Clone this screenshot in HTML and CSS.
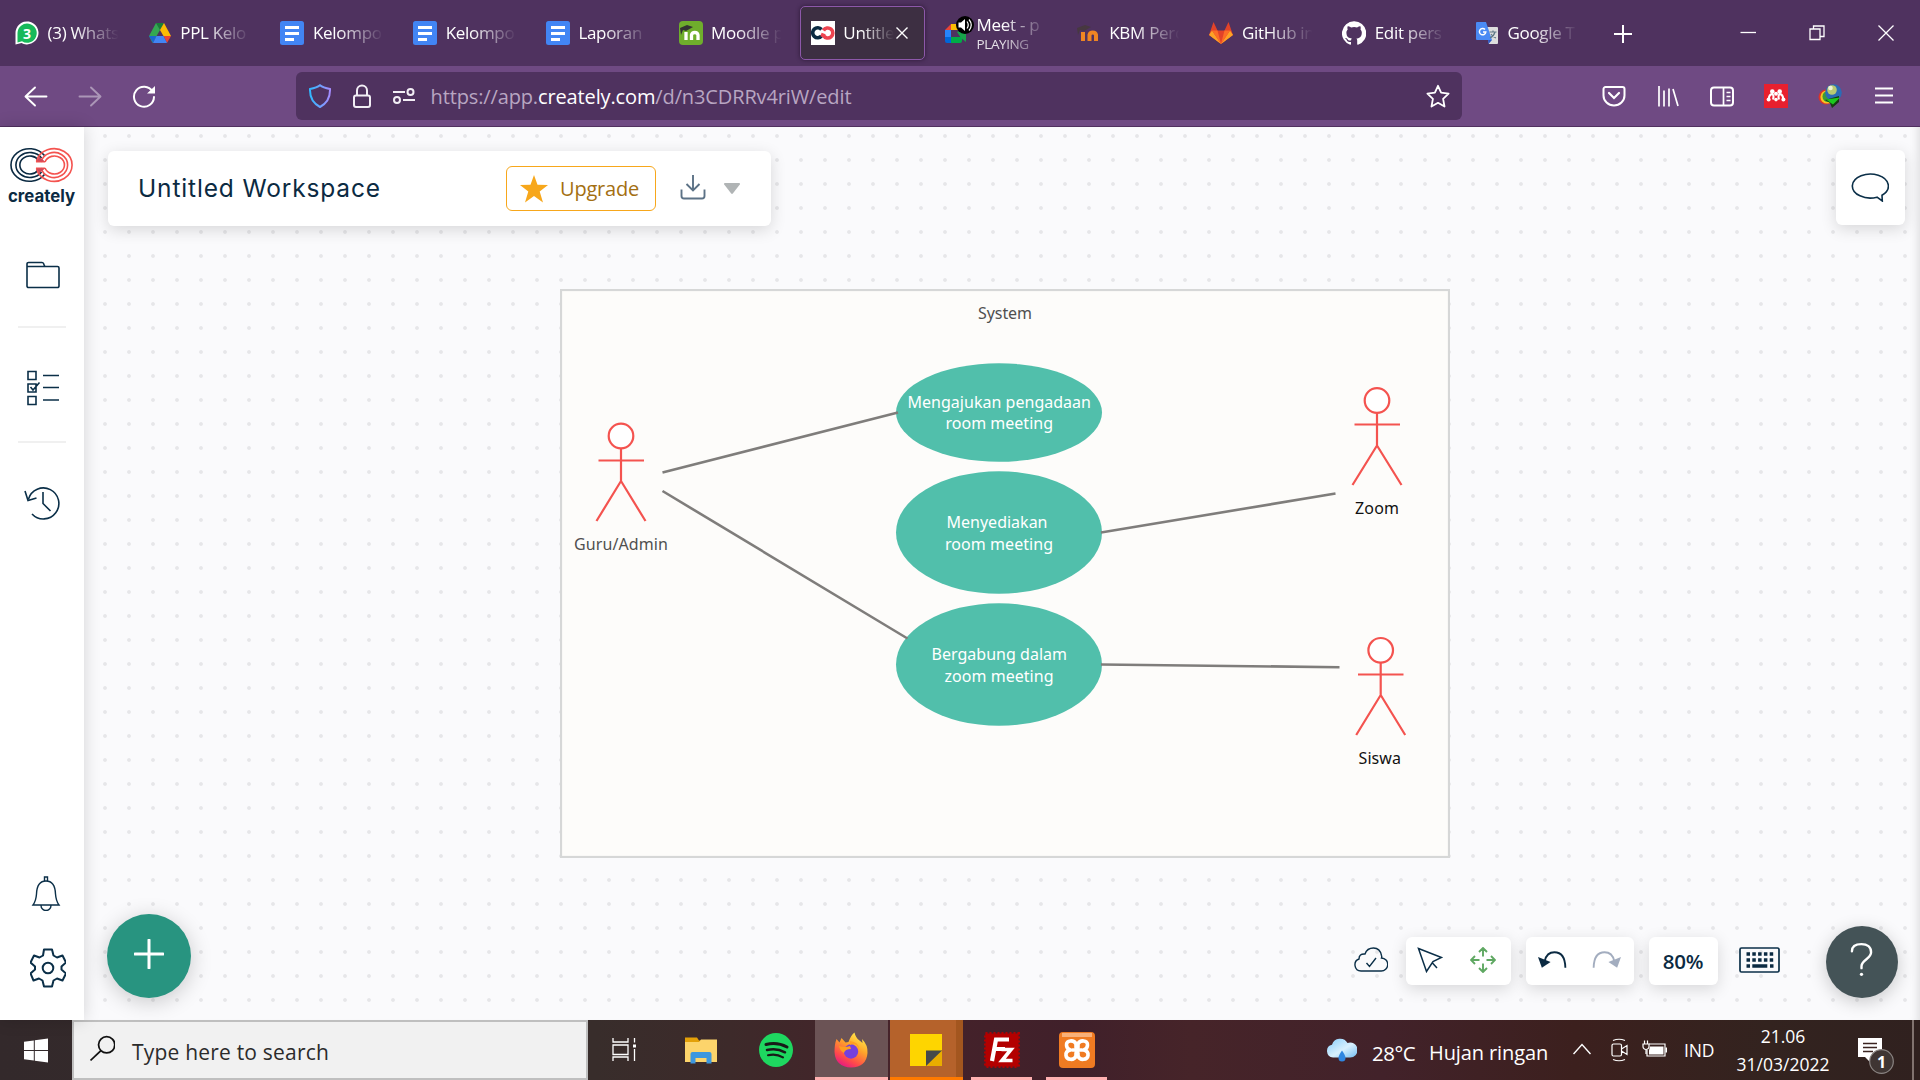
FILE: index.html
```html
<!DOCTYPE html>
<html lang="en">
<head>
<meta charset="utf-8">
<title>Untitled Workspace</title>
<link rel="stylesheet" href="styles.css">
</head>
<body>
<header class="browser">
  <div class="tabstrip">
    <div class="tab"><svg class="fav" viewBox="0 0 24 24"><path d="M0.5 23.5V12a11.5 11.5 0 1 1 6 10z" fill="#fff"/><path d="M2.5 21.5V12a9.6 9.6 0 1 1 4.5 8.3z" fill="#17b95a"/><text x="12" y="17.5" text-anchor="middle" class="wa-count">3</text></svg><span class="tab-title">(3) Whats</span></div>
    <div class="tab"><svg class="fav" viewBox="0 0 24 24"><path d="M8 2h8l-4 7z" fill="#188038"/><path d="M8 2l4 7-7.500 13L1 15z" fill="#34a853"/><path d="M16 2l7 13h-7.500L12 9z" fill="#fbbc04"/><path d="M15.500 15H23l-4 7z" fill="#ea4335"/><path d="M8.500 15H1l4 7z" fill="#1967d2"/><path d="M8.500 15h7l3.500 7H5z" fill="#4285f4"/></svg><span class="tab-title">PPL Kelo</span></div>
    <div class="tab"><svg class="fav" viewBox="0 0 24 24"><rect width="24" height="24" rx="2.500" fill="#4285f4"/><path d="M5 6.500h14M5 12.500h14M5 18.500h9" stroke="#fff" stroke-width="2.800"/></svg><span class="tab-title">Kelompo</span></div>
    <div class="tab"><svg class="fav" viewBox="0 0 24 24"><rect width="24" height="24" rx="2.500" fill="#4285f4"/><path d="M5 6.500h14M5 12.500h14M5 18.500h9" stroke="#fff" stroke-width="2.800"/></svg><span class="tab-title">Kelompo</span></div>
    <div class="tab"><svg class="fav" viewBox="0 0 24 24"><rect width="24" height="24" rx="2.500" fill="#4285f4"/><path d="M5 6.500h14M5 12.500h14M5 18.500h9" stroke="#fff" stroke-width="2.800"/></svg><span class="tab-title">Laporan</span></div>
    <div class="tab"><svg class="fav" viewBox="0 0 24 24"><rect width="24" height="24" rx="4" fill="#6fae2c"/><path d="M6.500 11v8M11 19v-6.500a2.700 2.700 0 0 1 5.300 0V19m0-6.500a2.700 2.700 0 0 1 5.300 0V19" fill="none" stroke="#fff" stroke-width="0"/><path d="M7 11v8M12.500 19v-5a3.300 3 0 0 1 6.500 0v5" fill="none" stroke="#fff" stroke-width="3.300"/><path d="M1 7l7-3 6 2-7 4-3-1-2 5z" fill="#333"/></svg><span class="tab-title">Moodle p</span></div>
    <div class="tab active"><svg class="fav" viewBox="0 0 24 24"><rect width="24" height="24" fill="#fff"/><path d="M10.500 8.500a5 5 0 1 0 0 6.500" fill="none" stroke="#0b2a42" stroke-width="3.600"/><path d="M12.500 9.500a5 5 0 1 1 0 5M10 13.500l4 1.500" fill="none" stroke="#ee4450" stroke-width="3.600"/></svg><span class="tab-title short">Untitle</span><svg class="tab-close" viewBox="0 0 12 12"><path d="M.5.5l11 11M11.500.5l-11 11" stroke="#fff" stroke-width="1.400"/></svg></div>
    <div class="tab meet"><svg class="fav" viewBox="0 0 24 24"><path d="M7 3v6H1z" fill="#ea4335"/><path d="M7 3h10v6H7z" fill="#fbbc04"/><path d="M1 9h6v7H1z" fill="#2684fc"/><path d="M1 16h6v6H3a2 2 0 0 1-2-2z" fill="#0066da"/><path d="M7 16h11v4a2 2 0 0 1-2 2H7z" fill="#00ac47"/><path d="M13 11l9-5v15l-5-4z" fill="#18a34a"/></svg><svg class="sound" viewBox="0 0 18 18"><circle cx="9" cy="9" r="9" fill="#000"/><path d="M2.500 6.500h2.500L9 3v12L5 11.500H2.500z" fill="#fff"/><path d="M11 5.500q2.500 3.500 0 7M13 3.500q4.500 5.500 0 11" stroke="#fff" fill="none" stroke-width="1.200"/></svg><span class="tab-lines"><span class="tab-title">Meet - p</span><span class="tab-title small">PLAYING</span></span></div>
    <div class="tab"><svg class="fav" viewBox="0 0 24 24"><path d="M6 11v9M12.500 20v-6a3.300 3 0 0 1 6.500 0v6" fill="none" stroke="#ef8523" stroke-width="4"/><path d="M0 7l8-3 6 2-7 4-4-1-2 5z" fill="#473840"/></svg><span class="tab-title">KBM Perc</span></div>
    <div class="tab"><svg class="fav" viewBox="0 0 24 24"><path d="M4.500 1L0 14l12 9 12-9-4.500-13L15.500 9.500h-7z" fill="#e24329"/><path d="M0 14l3-4.500L12 23zM24 14l-3-4.500L12 23z" fill="#fca326"/><path d="M3 9.500h5.500L12 23zM21 9.500h-5.500L12 23z" fill="#fc6d26"/></svg><span class="tab-title">GitHub in</span></div>
    <div class="tab"><svg class="fav" viewBox="0 0 24 24"><path fill="#fff" d="M12 .3a12 12 0 0 0-3.800 23.400c.6.100.8-.3.800-.6v-2.200c-3.300.7-4-1.400-4-1.400-.6-1.400-1.400-1.800-1.400-1.800-1-.7.100-.7.100-.7 1.200.1 1.900 1.200 1.900 1.200 1 1.900 2.800 1.300 3.500 1 .1-.8.400-1.300.8-1.600-2.700-.3-5.500-1.300-5.500-6 0-1.200.5-2.300 1.300-3.100-.2-.4-.6-1.600 0-3.200 0 0 1-.3 3.400 1.200a11.500 11.500 0 0 1 6 0c2.300-1.500 3.300-1.200 3.300-1.200.6 1.600.2 2.800.1 3.200.8.800 1.300 1.900 1.300 3.200 0 4.600-2.800 5.600-5.500 5.900.5.400.9 1.100.9 2.200v3.300c0 .3.100.7.800.6A12 12 0 0 0 12 .3"/></svg><span class="tab-title">Edit pers</span></div>
    <div class="tab"><svg class="fav" viewBox="0 0 24 24"><path d="M10 6h12a1 1 0 0 1 1 1v15a1 1 0 0 1-1 1h-8z" fill="#dedede"/><path d="M2 1h9l6 18H2a1 1 0 0 1-1-1V2a1 1 0 0 1 1-1z" fill="#4a8af4"/><path d="M13 19h4l-3.500 4z" fill="#2a56c6"/><path d="M10 8.500a3.200 3.200 0 1 0 .8 2.500H8" fill="none" stroke="#fff" stroke-width="1.500"/><path d="M14.500 11h7M18 9.500V11m2 0q-1 4-5 6m1-4q2 3 5 4" fill="none" stroke="#607988" stroke-width="1.200"/></svg><span class="tab-title">Google T</span></div>
    <svg class="newtab" viewBox="0 0 18 18"><path d="M9 0v18M0 9h18" stroke="#fff" stroke-width="2"/></svg>
    <div class="winctl">
      <svg viewBox="0 0 16 16"><path d="M.5 7.500H16" stroke="#fff" stroke-width="1.300"/></svg>
      <svg viewBox="0 0 16 16"><path d="M1 4h10v10.500H1zM4.500 4V1H15v10.500h-4" fill="none" stroke="#fff" stroke-width="1.300"/></svg>
      <svg viewBox="0 0 16 16"><path d="M.5.5l15 15M15.500.5l-15 15" stroke="#fff" stroke-width="1.300"/></svg>
    </div>
  </div>
  <div class="toolbar">
    <span class="btn"><svg viewBox="0 0 24 24"><path d="M22.500 12.500H2M11 3.500l-9.500 9 9.500 9" fill="none" stroke="#fff" stroke-width="1.900" stroke-linejoin="round" stroke-linecap="round"/></svg></span>
    <span class="btn dim"><svg viewBox="0 0 24 24"><path d="M1.500 12.500H22M13 3.500l9.500 9-9.500 9" fill="none" stroke="#fff" stroke-width="1.900" stroke-linejoin="round" stroke-linecap="round"/></svg></span>
    <span class="btn"><svg viewBox="0 0 24 24"><path d="M20.500 7.500A10 10 0 1 0 22 13" fill="none" stroke="#fff" stroke-width="2" stroke-linecap="round"/><path d="M23 2V9.500h-8z" fill="#fff"/></svg></span>
    <div class="urlbar">
      <svg viewBox="0 0 24 24"><defs><linearGradient id="sh" x1="0" x2="1"><stop offset="0" stop-color="#2fb8ff"/><stop offset="1" stop-color="#a58cff"/></linearGradient></defs><path d="M12 1.200c3 2.400 6 3 10 3.800.3 8-2.500 14-10 18C4.500 19 1.700 13 2 5c4-.8 7-1.400 10-3.800z" fill="none" stroke="url(#sh)" stroke-width="2"/></svg>
      <svg class="lock" viewBox="0 0 24 24"><rect x="4" y="11.500" width="16" height="11.500" rx="2" fill="none" stroke="#f2eef5" stroke-width="2"/><path d="M7 11V6.500a5 5 0 0 1 10 0V11" fill="none" stroke="#f2eef5" stroke-width="2"/></svg>
      <svg class="perm" viewBox="0 0 24 24"><path d="M1 8h12M11 16h12" stroke="#f2eef5" stroke-width="2"/><circle cx="18.500" cy="8" r="3" fill="none" stroke="#f2eef5" stroke-width="2"/><circle cx="5" cy="16" r="3" fill="none" stroke="#f2eef5" stroke-width="2"/></svg>
      <span class="url">https://app.<b>creately.com</b>/d/n3CDRRv4riW/edit</span>
      <svg class="star" viewBox="0 0 24 24"><path d="M12 1.800l3.100 6.900 7.500.9-5.500 5.200 1.400 7.700-6.500-3.700-6.500 3.700 1.400-7.700L1.400 9.600l7.500-.9z" fill="none" stroke="#fff" stroke-width="1.800" stroke-linejoin="round"/></svg>
    </div>
    <div class="tools">
      <span class="btn"><svg viewBox="0 0 24 24"><path d="M3.500 3h17a2 2 0 0 1 2 2v6.500a10.500 10 0 0 1-21 0V5a2 2 0 0 1 2-2z" fill="none" stroke="#fff" stroke-width="2"/><path d="M7 9l5 5 5-5" fill="none" stroke="#fff" stroke-width="2.200" stroke-linecap="round"/></svg></span>
      <span class="btn"><svg viewBox="0 0 24 24"><path d="M3 2v20.500M8 6.500v16M13 4.500v18M17 5l5 17" fill="none" stroke="#fff" stroke-width="1.700"/></svg></span>
      <span class="btn"><svg viewBox="0 0 24 24"><rect x="1" y="3.500" width="22" height="18" rx="3" fill="none" stroke="#fff" stroke-width="2"/><path d="M13.500 3.500v18M16.500 8.500h4M16.500 12.500h4M16.500 16.500h4" stroke="#fff" stroke-width="1.700"/></svg></span>
      <span class="btn"><svg viewBox="0 0 24 24"><rect width="24" height="24" fill="#e8202e"/><g fill="#fff"><circle cx="8.300" cy="7.600" r="2.300"/><circle cx="15.700" cy="7.600" r="2.300"/><circle cx="12" cy="9.800" r="2"/><circle cx="4.600" cy="15.600" r="2"/><circle cx="12" cy="15.600" r="1.800"/><circle cx="19.400" cy="15.600" r="2"/></g><path d="M4.800 15q.2-4.500 3.500-5 2 1.500.7 5.500M19.200 15q-.2-4.500-3.500-5-2 1.500-.7 5.500" fill="none" stroke="#fff" stroke-width="2.100"/></svg></span>
      <span class="btn"><svg viewBox="0 0 24 24"><circle cx="8" cy="13" r="7.500" fill="#d9342b"/><circle cx="9" cy="13" r="6.600" fill="#f4c61f"/><circle cx="10" cy="12.500" r="5.500" fill="#3b9b39"/><circle cx="15.500" cy="8.500" r="8.300" fill="#2b6cb5"/><circle cx="14" cy="6" r="4.800" fill="#b9ca72"/><circle cx="12.500" cy="4" r="2.300" fill="#eef3d6"/><path d="M7 16l14-4v6l-7 6-2-5z" fill="#173b12"/><path d="M8 15.500l14-2-7 7z" fill="#1cc81f"/></svg></span>
      <span class="btn"><svg viewBox="0 0 24 24"><path d="M3 4.500h18M3 11.500h18M3 18.500h18" stroke="#fff" stroke-width="1.900"/></svg></span>
    </div>
  </div>
</header>

<main class="app">
  <nav class="sidebar">
    <svg class="logo" viewBox="0 0 68 58"><g fill="none" stroke="#0b2a42" stroke-width="1.600"><path d="M36.500 8.500A18.500 16.300 0 1 0 36.500 27.500M33.500 11A14 12.500 0 1 0 33.500 25M30.500 13.500A10 9 0 1 0 30.500 22.500"/></g><g fill="none" stroke="#f4534f" stroke-width="1.600"><path d="M28.500 14.500A18 16.300 0 1 1 28.500 21.500M33 15A13.500 12.500 0 1 1 33 21M37 15A10 9 0 1 1 37 21"/><path d="M28 14.800h9M28 21.200h9"/></g><path d="M31 9.500l6 5h-8zM31 26.500l6-5h-8z" fill="#d2495a"/><text x="0" y="54.500" textLength="67" lengthAdjust="spacingAndGlyphs" class="brand">creately</text></svg>
    <svg class="folder" viewBox="0 0 34 28"><path d="M1 5.500V3a1.500 1.500 0 0 1 1.500-1.500H16q1.500 0 2 2l.8 2M1 5.500h30.500A1.500 1.500 0 0 1 33 7v18a1.500 1.500 0 0 1-1.500 1.500h-29A1.500 1.500 0 0 1 1 25z"/></svg>
    <hr>
    <svg class="list" viewBox="0 0 34 36"><path d="M2 1.500h8v8H2zM2 14h8v8H2zM2 26.500h8v8H2zM17 5.500h16M17 17.500h16M17 30h16M4.500 17l2.500 3 6.500-7.500"/></svg>
    <hr class="second">
    <svg class="history" viewBox="0 0 36 34"><path d="M4.500 13A15.500 15.500 0 1 1 8 28M1 5l3 9.500 8.500-2.500M19 6v11.500l7.500 7.500"/></svg>
    <svg class="bell" viewBox="0 0 30 36"><path d="M13.500 6V2h3v4M2 30q3-4 3.500-11C5.800 11 8 6 15 6s9.200 5 9.500 13q.5 7 3.500 11zM10 30.500a5 5 0 0 0 10 0"/></svg>
    <svg class="gear" viewBox="0 0 36 40"><path d="M14 1.500h8l1.500 6 3.500 2 5.500-2 3.500 7-4.500 4v3l4.500 4-3.500 7-5.500-2-3.500 2-1.500 6h-8l-1.500-6-3.500-2-5.500 2L.5 25.500 5 21.500v-3L.5 14.500l3.500-7 5.500 2 3.500-2z"/><circle cx="18" cy="20" r="5.300"/></svg>
  </nav>
  <section class="canvas">
    <svg class="diagram" viewBox="0 0 890 569">
      <rect x="1" y="1" width="888" height="567" fill="#fdfcfa" stroke="#d6d7d7" stroke-width="2.200"/>
      <g fill="#51bfab"><ellipse cx="439" cy="123.500" rx="103" ry="49.300"/><ellipse cx="439" cy="243.500" rx="103" ry="61.300"/><ellipse cx="439" cy="375.500" rx="103" ry="61.300"/></g>
      <g stroke="#7f7d7b" stroke-width="2.600"><path d="M102.500 183.500L338 123.500M102.500 202L347.500 349.500M541 243.500L775.500 204.500M541 375.500L779.500 378.200"/></g>
      <g class="actor"><circle cx="61" cy="147" r="12.300"/><path d="M61 159.500v32.500M38.500 171.500h45.500M36.500 232L61 192l24.500 40"/></g>
      <g class="actor"><circle cx="817" cy="111.500" r="12.300"/><path d="M817 124V157M794.500 135.500h45.500M792.500 196L817 156.500l24.500 39.500"/></g>
      <g class="actor"><circle cx="820.700" cy="361.300" r="12.300"/><path d="M820.700 373.500V407M798 385.500h45.500M796.200 446l24.500-40 24.500 40"/></g>
      <text class="grey" x="418" y="29.700" textLength="54">System</text>
      <text class="grey" x="14" y="260.700" textLength="94">Guru/Admin</text>
      <text x="795" y="224.700" textLength="44">Zoom</text>
      <text x="798.500" y="474.700" textLength="42.500">Siswa</text>
      <g class="white">
        <text x="347.500" y="118.700" textLength="183.500">Mengajukan pengadaan</text><text x="385.500" y="140.300" textLength="107.500">room meeting</text>
        <text x="386.500" y="238.700" textLength="101">Menyediakan</text><text x="385" y="260.500" textLength="108">room meeting</text>
        <text x="371.500" y="370.700" textLength="135.500">Bergabung dalam</text><text x="384.500" y="392.500" textLength="109">zoom meeting</text>
      </g>
    </svg>
    <div class="titlebar">
      <span class="doc-title">Untitled Workspace</span>
      <span class="upgrade"><svg viewBox="0 0 28 28"><path d="M14 0l3.500 9.800L28 10l-8.300 6.600L23 27.500l-9-6.500-9 6.500 3.300-10.900L0 10l10.500-.2z" fill="#f7a71b"/></svg>Upgrade</span>
      <svg class="download" viewBox="0 0 26 26"><path d="M1.500 15.500V22a2.500 2.500 0 0 0 2.500 2.500h18a2.500 2.500 0 0 0 2.500-2.500v-6.500M13 1v15.500M6.500 10l6.500 6.500 6.500-6.500" fill="none" stroke="#5c7286" stroke-width="1.900"/></svg>
      <svg class="caret" viewBox="0 0 16 11"><path d="M1 0h14a1 1 0 0 1 .8 1.500L9 10.300a1.300 1.300 0 0 1-2 0L.2 1.500A1 1 0 0 1 1 0z" fill="#b0b4b5"/></svg>
    </div>
    <div class="chat"><svg viewBox="0 0 38 29"><path d="M26 24.200A18 12 0 1 1 31 22.200l.3 5.800z" fill="none" stroke="#0b2f48" stroke-width="1.600"/></svg></div>
    <div class="add"><svg viewBox="0 0 30 30"><path d="M15 1v28M1 15h28" stroke="#fff" stroke-width="3" stroke-linecap="round"/></svg></div>
    <div class="controls">
      <svg class="cloud" viewBox="0 0 34 25"><path d="M7 24a6.200 6.200 0 0 1-2-12Q5 6.500 11 7q2-6 8.500-6T27.500 8.500q.5 1 0 2.500A6.500 6.500 0 0 1 27 24zM12.500 16l3 3.500 6.500-8.500" fill="none" stroke="#0b2f48" stroke-width="1.400"/></svg>
      <div class="panel pointer">
        <svg viewBox="0 0 26 26"><path d="M1.500 1.500l23 9-8.500 4-6.500 10zM15 15.500l5 5.500" fill="none" stroke="#0b2f48" stroke-width="1.500"/></svg>
        <svg viewBox="0 0 26 26"><path d="M13 9.500V1M9 5l4-4 4 4M13 16.500V25M9 21l4 4 4-4M9.500 13H1M5 9l-4 4 4 4M16.500 13H25M21 9l4 4-4 4" fill="none" stroke="#5fa862" stroke-width="1.900"/></svg>
      </div>
      <div class="panel undo">
        <svg viewBox="0 0 30 26"><path d="M7 14Q9 5 17 5q11 0 11.300 16" fill="none" stroke="#0b2a42" stroke-width="1.900"/><path d="M0 10l13 5-9 6z" fill="#0b2a42"/></svg>
        <svg viewBox="0 0 30 26"><path d="M23 14Q21 5 13 5 2 5 1.700 21" fill="none" stroke="#a3adbf" stroke-width="1.900"/><path d="M30 10l-13 5 9 6z" fill="#a3adbf"/></svg>
      </div>
      <div class="panel zoom">80%</div>
      <svg class="keyboard" viewBox="0 0 41 26"><rect x="1" y="1" width="39" height="24" rx="1.500" fill="none" stroke="#0b2f48" stroke-width="1.700"/><path d="M7.500 7h27M7.500 13h27" stroke="#0b2a42" stroke-width="3.400" stroke-dasharray="3.500 2.300"/><path d="M7.500 19H11M13.300 19h15M31 19h3.500" stroke="#0b2a42" stroke-width="3.400"/></svg>
      <div class="help"><svg viewBox="0 0 24 36"><path d="M2 9.500C2 4.500 6 2 12 2s10 3 10 8.500c0 7-10 8-10 14.500v2" fill="none" stroke="#fff" stroke-width="2.500" stroke-linecap="round"/><circle cx="12" cy="33.500" r="1.700" fill="#fff"/></svg></div>
    </div>
  </section>
</main>

<footer class="taskbar">
  <div class="start"><svg viewBox="0 0 24 24"><path d="M0 3.300L9.800 2v9.500H0zM10.800 1.800L24 0v11.500H10.800zM0 12.500h9.800V22L0 20.700zM10.800 12.500H24V24l-13.200-1.800z" fill="#fff"/></svg></div>
  <div class="search"><svg viewBox="0 0 24 24"><circle cx="16" cy="8.500" r="7.800" fill="none" stroke="#111" stroke-width="1.700"/><path d="M10.500 14L.5 23.500" stroke="#111" stroke-width="1.700"/></svg><span>Type here to search</span></div>
  <div class="task"><svg viewBox="0 0 36 36"><path d="M5 6v4h15V6M5 29v-4h15v4M5 13h15v9.500H5zM26.500 6v4.500M26.500 17v12" fill="none" stroke="#fff" stroke-width="1.300"/><path d="M25 12.500h3v3h-3z" fill="#fff"/></svg></div>
  <div class="task"><svg viewBox="0 0 36 36"><path d="M2 5.500h12l2 3H33V13H2z" fill="#e3a008"/><path d="M2 10h14l2-2.500h16V30H2z" fill="#fcd46b"/><path d="M7.500 31.500V22a2 2 0 0 1 2-2h17a2 2 0 0 1 2 2v9.500h-5V26h-11v5.500z" fill="#3d97df"/></svg></div>
  <div class="task"><svg viewBox="0 0 36 36"><circle cx="18" cy="18" r="17" fill="#1ed760"/><g fill="none" stroke="#181a18" stroke-linecap="round"><path d="M8 12.500q11-3 21 2.500" stroke-width="3"/><path d="M9 18q9.500-2.500 18 2.300" stroke-width="2.500"/><path d="M10 23.300q8-2 15 2" stroke-width="2.100"/></g></svg></div>
  <div class="task firefox"><svg viewBox="0 0 36 36"><defs><linearGradient id="fx" x1=".8" y1="0" x2=".25" y2="1"><stop offset="0" stop-color="#fff44f"/><stop offset=".4" stop-color="#ffa52a"/><stop offset=".75" stop-color="#ff4a4a"/><stop offset="1" stop-color="#e31587"/></linearGradient></defs><path d="M3.500 7l3 3.500 2-4.500 4 4.500 3-.5Q18 3 21.500.5q1 5 5 8l3 2.500-.5-4q6 6 5.500 14-1 14-16.500 14.500Q2.500 35 1.500 20 1.500 12 3.500 7z" fill="url(#fx)"/><circle cx="18" cy="19.500" r="7.200" fill="#7540dd"/><path d="M6 14q6 2 11 0l1 3q-6 0-7 4-4-2-5-7zM17 13q6-3 9 4 0-7-9-8z" fill="#ff9e20"/></svg></div>
  <div class="task notes"><svg viewBox="0 0 36 36"><path d="M2 2h32v16L18 34H2z" fill="#fed500"/><path d="M34 18v16H18z" fill="#e9ad00"/><path d="M18 18.500h16L18 34z" fill="#45494b"/></svg></div>
  <div class="task open"><svg viewBox="0 0 36 36"><rect x="1.500" y="1.500" width="33" height="33" fill="#b30000" stroke="#b30000" stroke-width="3" stroke-dasharray="2 2"/><path d="M8 29L12 7.500h13M11 17h10" fill="none" stroke="#fff" stroke-width="4.200"/><path d="M17.500 17.500H27L18 28.500h10.500" fill="none" stroke="#fff" stroke-width="3.600"/></svg></div>
  <div class="task open"><svg viewBox="0 0 36 36"><rect width="36" height="36" rx="4" fill="#f07b22"/><path d="M3 1h30v4H3z" fill="#f9b078"/><path d="M17 12C15 7.500 7 8 7.500 13c0 3 2 4.500 4 5-2.500.5-5 2-4.500 5.500.5 4.500 8 5.500 10 .5M19 12c2-4.500 10-4 9.500 1 0 3-2 4.500-4 5 2.500.5 5 2 4.500 5.500-.5 4.500-8 5.500-10 .5M17 12v3.500M19 12v3.500M13.500 18H23M17 24v-3M19 24v-3" fill="none" stroke="#fff" stroke-width="3.600" stroke-linejoin="round" stroke-linecap="round"/></svg></div>
  <div class="tray">
    <svg class="weather" viewBox="0 0 31 24"><defs><linearGradient id="wc" x2="1" y2="1"><stop offset="0" stop-color="#86cdfb"/><stop offset=".55" stop-color="#d8f0fe"/><stop offset="1" stop-color="#72bdf3"/></linearGradient></defs><path d="M7 19.500a6.500 6.500 0 0 1-1-12.800A8.500 8.500 0 0 1 21.500 5 7.500 7.500 0 1 1 23.500 19.500z" fill="url(#wc)"/><path d="M16 12.500q3.500 5 3.500 7.500a3.500 3.500 0 0 1-7 0q0-2.500 3.500-7.500z" fill="#2f86e0"/></svg>
    <span class="temp">28°C</span><span class="cond">Hujan ringan</span>
    <svg class="chev" viewBox="0 0 18 12"><path d="M.5 11L9 1.500l8.500 9.500" fill="none" stroke="#fff" stroke-width="1.400"/></svg>
    <svg class="cam" viewBox="0 0 18 24"><path d="M1 7.500a1.500 1.500 0 0 1 1.500-1.500H9a1.500 1.500 0 0 1 1.500 1.500v9A1.500 1.500 0 0 1 9 18H2.500A1.500 1.500 0 0 1 1 16.500zM10.500 11L16 7.500v9L10.500 13M2 2.500q6-2.500 12 0M2 21.500q6 2.500 12 0" fill="none" stroke="#fff" stroke-width="1.200"/></svg>
    <svg class="batt" viewBox="0 0 25 18"><path d="M7 4h16v12H5v-6" fill="none" stroke="#fff" stroke-width="1.200"/><path d="M8 6.500h13.500v8H7v-4zM23.500 7.500H25v5h-1.500z" fill="#fff"/><path d="M1 4h6v2.500a3 3 0 0 1-6 0zM2.500 4V.5M5.500 4V.5M4 9.500V14" fill="none" stroke="#fff" stroke-width="1.200"/></svg>
    <span class="lang">IND</span>
    <span class="clock"><span>21.06</span><span class="date">31/03/2022</span></span>
    <svg class="notif" viewBox="0 0 40 38"><path d="M1 1h24v19H13l0 5-5-5H1z" fill="#fff"/><path d="M6 6.500h14M6 10.500h14M6 14.500h10" stroke="#3b2421" stroke-width="1.300"/><circle cx="24.500" cy="24.500" r="11.800" fill="#3f3533" stroke="#8b8583" stroke-width="1.200"/><text x="24.500" y="30.500" text-anchor="middle">1</text></svg>
  </div>
</footer>
</body>
</html>
```
FILE: styles.css
```css
* { box-sizing: border-box; }
body {
  margin: 0;
  width: 1920px;
  height: 1080px;
  overflow: hidden;
  display: flex;
  flex-direction: column;
  font-family: "Open Sans", "Noto Sans", sans-serif;
}
svg { display: block; flex: none; }

/* Browser chrome */
.browser { height: 127px; flex: none; background: #6f4a83; border-bottom: 1px solid #50305f; color: #fff; }
.tabstrip { height: 66px; background: #4f325f; display: flex; align-items: center; }
.tab {
  width: 124.730px;
  height: 54px;
  margin: 0 4px;
  padding-left: 10px;
  flex: none;
  display: flex;
  align-items: center;
  gap: 8.500px;
  position: relative;
  border: 1px solid transparent;
  border-radius: 5px;
}
.tab.active { background: #3d2f42; border-color: #8d58a9; box-shadow: 0 0 4px #2c1a36; gap: 8px; }
.fav { width: 24px; height: 24px; }
.wa-count { font: 700 14px "Open Sans", sans-serif; fill: #fff; }
.tab-title {
  width: 72px;
  white-space: nowrap;
  font-size: 17px;
  line-height: 24px;
  letter-spacing: -0.3px;
  -webkit-mask-image: linear-gradient(to right, #000 35%, transparent 98%);
  mask-image: linear-gradient(to right, #000 35%, transparent 98%);
}
.tab-title.short { width: 52px; }
.tab-close { width: 12px; height: 12px; margin-left: -7px; }
.sound { position: absolute; left: 22px; top: 9px; width: 18px; height: 18px; }
.tab-lines { display: flex; flex-direction: column; }
.tab-lines .tab-title { line-height: 22px; }
.tab-lines .small { font-size: 13.500px; line-height: 17px; letter-spacing: -0.4px; opacity: .85; }
.newtab { width: 18px; height: 18px; margin-left: 21px; margin-top: 2px; }
.winctl { margin-left: auto; display: flex; }
.winctl svg { width: 16px; height: 16px; margin: 0 26.500px; }

.toolbar { height: 60px; padding: 0 9px; display: flex; align-items: center; }
.btn { width: 54px; display: flex; justify-content: center; flex: none; }
.btn svg { width: 24px; height: 24px; }
.btn.dim { opacity: .42; }
.urlbar {
  width: 1166px;
  height: 48px;
  margin-left: 125px;
  padding: 0 12px;
  background: #4f325f;
  border-radius: 6px;
  display: flex;
  align-items: center;
}
.urlbar svg { width: 24px; height: 24px; }
.urlbar .lock { margin-left: 18px; }
.urlbar .perm { margin-left: 18px; }
.url { margin: 1px 0 0 14.500px; font-size: 20px; letter-spacing: -.13px; color: #b8a6c2; white-space: nowrap; }
.url b { font-weight: 400; color: #fff; }
.urlbar .star { margin-left: auto; }
.tools { margin-left: auto; display: flex; }

/* Application */
.app { height: 893px; display: flex; flex: none; }
.sidebar {
  width: 84px;
  flex: none;
  background: #fff;
  box-shadow: 0 0 16px rgba(0, 0, 0, .16);
  display: flex;
  flex-direction: column;
  padding-top: 20px;
  z-index: 1;
}
.sidebar svg { fill: none; stroke: #0b2f48; stroke-width: 1.600; }
.sidebar .logo { width: 68px; height: 58px; margin-left: 8px; stroke: none; overflow: visible; }
.brand { font: 700 17px "Inter", sans-serif; fill: #0b2a42; }
.sidebar hr { width: 48px; height: 2px; border: 0; margin: 37px 0 42px 18px; background: #f0f0f0; flex: none; }
.sidebar hr.second { margin: 35px 0 43px 18px; }
.folder { width: 34px; height: 28px; margin: 56px 0 0 26px; }
.list { width: 34px; height: 36px; margin-left: 26px; }
.history { width: 36px; height: 34px; margin-left: 24px; }
.bell { width: 30px; height: 36px; margin: auto 0 0 31px; stroke-width: 1.400 !important; }
.gear { width: 36px; height: 40px; margin: 37px 0 32px 30px; stroke-width: 2 !important; stroke-linejoin: round; }

.canvas {
  flex: 1;
  position: relative;
  background: radial-gradient(circle at 12px 12px, #e6e6e9 1.400px, transparent 2.300px) 9px -3px / 24px 24px #fafafc;
  box-shadow: inset -9px 0 9px -7px rgba(0, 0, 0, .12);
}
.diagram { position: absolute; left: 476px; top: 162px; width: 890px; height: 569px; font: 16px "Noto Sans", sans-serif; }
.diagram text { fill: #111; }
.diagram .grey { fill: #505050; }
.diagram .white text { fill: #fff; }
.actor { fill: #fff; stroke: #f4534f; stroke-width: 2.200; }
.actor path { fill: none; }

.titlebar, .chat, .panel { background: #fff; border-radius: 6px; box-shadow: 0 4px 16px rgba(0, 0, 0, .14); }
.titlebar {
  position: absolute;
  left: 24px;
  top: 24px;
  width: 663px;
  height: 75px;
  padding-left: 30px;
  display: flex;
  align-items: center;
}
.doc-title { width: 368px; margin-top: -2px; font: 400 24.500px "Inter", sans-serif; color: #0b2a42; letter-spacing: .85px; white-space: nowrap; }
.upgrade {
  width: 150px;
  height: 45px;
  border: 1.500px solid #f7a71b;
  border-radius: 6px;
  padding-left: 13px;
  display: flex;
  align-items: center;
  gap: 12px;
  font-size: 20px;
  letter-spacing: -.2px;
  color: #a36f12;
}
.upgrade svg { width: 28px; height: 28px; }
.download { width: 26px; height: 26px; margin: 0 18px 4px 24px; }
.caret { width: 16px; height: 11px; }
.chat { position: absolute; right: 15px; top: 23px; width: 69px; height: 75px; display: flex; justify-content: center; align-items: center; }
.chat svg { width: 38px; height: 29px; margin-right: 1px; }
.add {
  position: absolute;
  left: 23px;
  bottom: 22px;
  width: 84px;
  height: 84px;
  border-radius: 50%;
  background: #289480;
  box-shadow: 0 4px 22px rgba(0, 0, 0, .2);
  display: flex;
  justify-content: center;
  padding-top: 25px;
}
.add svg { width: 30px; height: 30px; }
.controls { position: absolute; right: 22px; bottom: 22px; height: 72px; display: flex; align-items: center; }
.controls > svg { margin-bottom: 5px; }
.cloud { width: 34px; height: 25px; }
.panel { height: 48px; display: flex; align-items: center; margin-top: -2px; }
.pointer { width: 105px; margin-left: 18px; padding: 0 15px 2px 11px; justify-content: space-between; }
.pointer svg { width: 26px; height: 26px; }
.undo { width: 108px; margin-left: 15px; padding: 0 13px 2px 12px; justify-content: space-between; }
.undo svg { width: 29px; height: 26px; }
.zoom { width: 69px; margin-left: 15px; padding-right: 1px; justify-content: center; font-size: 20.500px; font-weight: 600; letter-spacing: -.3px; color: #0b2a42; }
.keyboard { width: 41px; height: 26px; margin-left: 21px; }
.help { width: 72px; height: 72px; margin-left: 46px; border-radius: 50%; background: #445357; box-shadow: 0 4px 18px rgba(0, 0, 0, .2); display: flex; justify-content: center; padding: 16px 1px 0 0; }
.help svg { width: 23px; height: 35px; }

/* Taskbar */
.taskbar {
  height: 60px;
  flex: none;
  display: flex;
  color: #fff;
  background: linear-gradient(to right, #33292b 0, #382d2b 31%, #3d2a2a 38%, #46222a 47%, #40202a 56%, #462429 62%, #42222a 72%, #3c201e 82%, #33231f 92%, #30211f 100%);
}
.start { width: 72px; display: flex; align-items: center; justify-content: center; }
.start svg { width: 24px; height: 27px; }
.search { width: 516px; background: #f1f1f1; border: 2px solid #bfbfbf; display: flex; align-items: center; padding-left: 16px; color: #2b2b2b; font-size: 21px; letter-spacing: .2px; white-space: nowrap; }
.search svg { width: 25px; height: 27px; margin-bottom: 4px; }
.search span { margin: 3px 0 0 17px; }
.task { width: 75.200px; display: flex; align-items: center; justify-content: center; border: solid transparent; border-width: 0 1px; }
.task svg { width: 36px; height: 36px; }
.task.firefox { background: #6b5355; background-clip: padding-box; box-shadow: inset 0 -3px #ffb1b1; }
.task.notes { background: linear-gradient(to right, #b5622b 66px, #a3561f 66px); background-clip: padding-box; box-shadow: inset 0 -3px #ff7a00; }
.task.open { background: linear-gradient(#ffb1b1, #ffb1b1) center bottom / 61px 3px no-repeat; }
.tray { flex: 1; display: flex; align-items: center; justify-content: flex-end; border-right: 6px solid transparent; white-space: nowrap; box-shadow: inset -2px 0 #81736f; }
.weather { width: 31px; height: 24px; }
.temp { width: 57px; margin: 5px 0 0 15px; font-size: 20.500px; letter-spacing: -.5px; }
.cond { width: 144px; margin-top: 5px; font-size: 20px; letter-spacing: -.1px; }
.chev { width: 18px; height: 12px; margin-bottom: 2px; }
.cam { width: 18px; height: 24px; margin-left: 20px; }
.batt { width: 25px; height: 18px; margin: 0 0 2px 13px; }
.lang { width: 52px; margin-left: 17px; font-size: 17.500px; letter-spacing: -.2px; }
.clock { width: 94px; display: flex; flex-direction: column; align-items: center; font-size: 17.500px; line-height: 28px; letter-spacing: 0; }
.notif { width: 40px; height: 38px; margin: 12px 17px 0 27px; }
.notif text { font: 700 16px "Open Sans", sans-serif; fill: #fff; }
```
